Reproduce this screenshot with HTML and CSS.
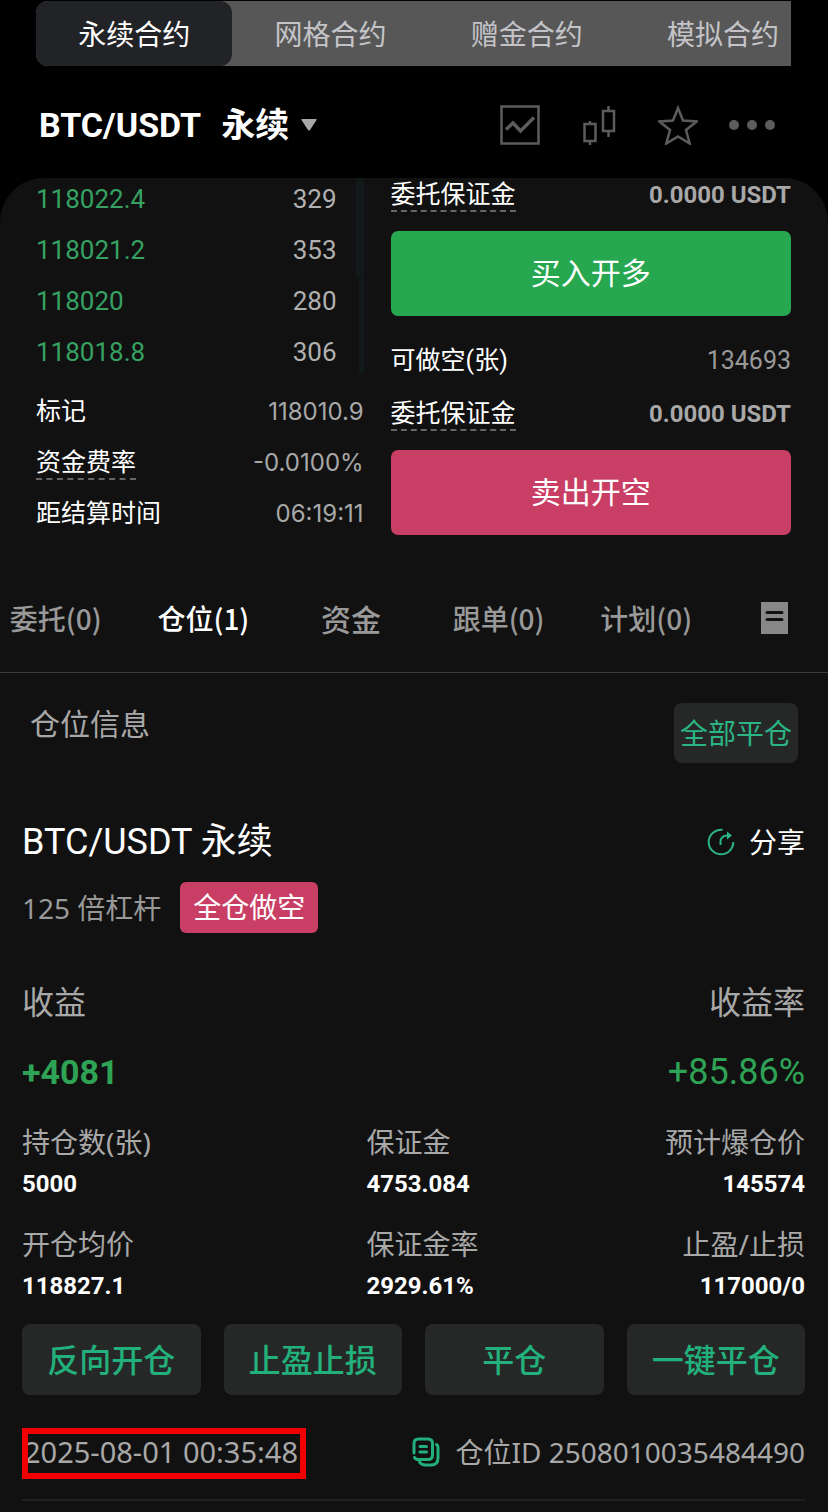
FILE: index.html
```html
<!DOCTYPE html>
<html lang="zh-CN">
<head>
    <meta charset="utf-8">
    <meta name="viewport" content="width=device-width, initial-scale=1">
    <title>BTC/USDT 永续</title>
    <link rel="stylesheet" href="styles.css">
</head>
<body>
    <!-- Contract type -->
    <nav class="contract-tabs">
        <button class="contract-tab active">永续合约</button>
        <button class="contract-tab">网格合约</button>
        <button class="contract-tab">赠金合约</button>
        <button class="contract-tab">模拟合约</button>
    </nav>

    <!-- Pair header -->
    <header class="pair-header">
        <button class="pair-select">
            <span>BTC/USDT</span>
            <span class="pair-type">永续</span>
            <svg class="caret" width="16" height="12" viewBox="0 0 16 12"><path d="M1 0h14q1 0 .5 1L9 11q-1 1-2 0L.5 1Q0 0 1 0z" fill="#a8a8a8"/></svg>
        </button>
        <div class="header-icons">
            <button class="icon-button" aria-label="走势">
                <svg width="40" height="40" viewBox="0 0 40 40" fill="none" stroke="#5c5c5c">
                    <rect x="1.5" y="1.5" width="37" height="37" stroke-width="2.5"/>
                    <path d="M6 24.500l7-6.500 7.500 8L34 12.500" stroke-width="3.500"/>
                </svg>
            </button>
            <button class="icon-button" aria-label="K线">
                <svg width="34" height="40" viewBox="0 0 34 40" fill="none" stroke="#5c5c5c" stroke-width="2.500">
                    <rect x="2.500" y="19" width="11" height="17"/>
                    <path d="M8 16v3M8 36v4M26.500 1v5M26.500 26v6"/>
                    <rect x="21" y="6" width="11" height="20"/>
                </svg>
            </button>
            <button class="icon-button" aria-label="收藏">
                <svg width="40" height="40" viewBox="0 0 40 40" fill="none" stroke="#5c5c5c" stroke-width="2.500">
                    <path d="M20 3l5 12.500 13.500 1-10.500 8.500 3.700 13.500L20 31.500 8.300 38.500 12 25 1.500 16.500l13.500-1z"/>
                </svg>
            </button>
            <button class="icon-button" aria-label="更多">
                <svg width="48" height="12" viewBox="0 0 48 12" fill="#5c5c5c">
                    <circle cx="6" cy="6" r="5"/><circle cx="24" cy="6" r="5"/><circle cx="42" cy="6" r="5"/>
                </svg>
            </button>
        </div>
    </header>

    <main class="panel">
        <div class="trade">
            <!-- Order book and mark price -->
            <div class="market">
                <ul class="order-book">
                    <li><span class="price">118022.4</span><span>329</span></li>
                    <li><span class="price">118021.2</span><span>353</span></li>
                    <li><span class="price">118020</span><span>280</span></li>
                    <li><span class="price">118018.8</span><span>306</span></li>
                </ul>
                <dl class="rates">
                    <div><dt>标记</dt><dd>118010.9</dd></div>
                    <div><dt><span class="hint">资金费率</span></dt><dd>-0.0100%</dd></div>
                    <div><dt>距结算时间</dt><dd>06:19:11</dd></div>
                </dl>
            </div>

            <!-- Order form -->
            <div class="order-form">
                <div class="form-row"><span class="hint">委托保证金</span><span class="margin">0.0000 USDT</span></div>
                <button class="order-button buy">买入开多</button>
                <div class="form-row available"><span>可做空(张)</span><span class="amount">134693</span></div>
                <div class="form-row"><span class="hint">委托保证金</span><span class="margin">0.0000 USDT</span></div>
                <button class="order-button sell">卖出开空</button>
            </div>
        </div>

        <nav class="list-tabs">
            <button class="list-tab">委托(0)</button>
            <button class="list-tab active">仓位(1)</button>
            <button class="list-tab funds">资金</button>
            <button class="list-tab">跟单(0)</button>
            <button class="list-tab">计划(0)</button>
            <button class="list-tab" aria-label="历史">
                <svg width="27" height="32" viewBox="0 0 27 32">
                    <path d="M0 0h27v32H0z" fill="#888"/>
                    <path d="M6 10.500h15M6 17.500h15" stroke="#111" stroke-width="3" stroke-linecap="round"/>
                </svg>
            </button>
        </nav>

        <div class="position-head">
            <h2>仓位信息</h2>
            <button class="close-all">全部平仓</button>
        </div>

        <!-- Position card -->
        <section class="position">
            <div class="position-row">
                <h3>BTC/USDT 永续</h3>
                <button class="share">
                    <svg width="28" height="28" viewBox="0 0 28 28" fill="none" stroke="#2bb585" stroke-width="2">
                        <path d="M15.500 1.800A12.300 12.300 0 1 0 26.300 14"/>
                        <path d="M13.500 17v-3q0-6.500 7-6.500h2"/>
                        <path d="M20 3.500L25 7.500l-5 4z" fill="#2bb585" stroke="none"/>
                    </svg>
                    <span>分享</span>
                </button>
            </div>
            <div class="leverage">
                <span>125 倍杠杆</span>
                <span class="badge">全仓做空</span>
            </div>

            <div class="position-row profit-labels">
                <span>收益</span><span>收益率</span>
            </div>
            <div class="position-row profit-values">
                <strong>+4081</strong><span class="rate">+85.86%</span>
            </div>

            <dl class="stats">
                <div><dt>持仓数(张)</dt><dd>5000</dd></div>
                <div><dt>保证金</dt><dd>4753.084</dd></div>
                <div><dt>预计爆仓价</dt><dd>145574</dd></div>
                <div><dt>开仓均价</dt><dd>118827.1</dd></div>
                <div><dt>保证金率</dt><dd>2929.61%</dd></div>
                <div><dt>止盈/止损</dt><dd>117000/0</dd></div>
            </dl>

            <div class="actions">
                <button>反向开仓</button>
                <button>止盈止损</button>
                <button>平仓</button>
                <button>一键平仓</button>
            </div>

            <div class="position-foot">
                <time class="open-time" datetime="2025-08-01T00:35:48">2025-08-01 00:35:48</time>
                <button class="position-id">
                    <svg width="28" height="30" viewBox="0 0 28 30" fill="none" stroke="#22b07c" stroke-width="3" stroke-linecap="round">
                        <path d="M2 16V6.500Q2 2 6.500 2h9.500q4.500 0 4.500 4.500V18q0 4.500-4.500 4.500H6.500Q3.500 22.500 2.500 20.500"/>
                        <path d="M8 9.500h6.500M8 15h6.500"/>
                        <path d="M24.500 7.500q1.500 1.200 1.500 3V21q0 7-7 7h-6q-3.500 0-5.500-3"/>
                    </svg>
                    <span>仓位ID 2508010035484490</span>
                </button>
            </div>
        </section>
    </main>
</body>
</html>
```

FILE: styles.css
```css
* {
    box-sizing: border-box;
}

body {
    display: flex;
    flex-direction: column;
    min-height: 100vh;
    margin: 0;
    background-color: #000;
    color: #fff;
    font-family: "Noto Sans", "Noto Sans CJK SC", sans-serif;
    font-size: 28px;
    line-height: 42px;
}

button {
    padding: 0;
    border: none;
    background: none;
    color: inherit;
    font: inherit;
    cursor: pointer;
}

h2, h3, ul, dl, dd {
    margin: 0;
    padding: 0;
    font-weight: normal;
}

svg {
    display: block;
    flex: none;
}

/* contract type tabs, the last one runs off the right edge */
.contract-tabs {
    display: flex;
    margin: 1px 37px 0 36px;
    height: 65px;
    overflow: hidden;
    background-color: #575757;
    border-radius: 12px 0 0 12px;
}

.contract-tab {
    flex: 0 0 26%;
    color: #c4c4c8;
}

.contract-tab.active {
    background-color: #222327;
    border-radius: 12px;
    color: #fff;
}

/* pair header */
.pair-header {
    display: flex;
    align-items: center;
    justify-content: space-between;
    height: 112px;
    padding: 5px 52px 0 39px;
}

.pair-select {
    display: flex;
    align-items: center;
    font-family: Roboto, "Noto Sans CJK SC", sans-serif;
    font-size: 34px;
    font-weight: bold;
}

.pair-type {
    margin: 0 12px 0 20px;
}

.header-icons {
    display: flex;
    align-items: center;
}

.icon-button:nth-child(2) {
    margin: 0 42px;
}

.icon-button:nth-child(4) {
    margin-left: 30px;
}

/* main panel */
.panel {
    flex: 1;
    padding-bottom: 10px;
    background-color: #111;
    border-radius: 44px 44px 0 0;
}

.trade {
    display: grid;
    grid-template-columns: 9fr 11fr;
    gap: 27px;
    padding: 0 37px 0 36px;
    font-family: Roboto, "Noto Sans CJK SC", sans-serif;
    font-size: 25px;
}

.order-book {
    display: flex;
    flex-direction: column;
    gap: 9px;
    padding-right: 27px;
    list-style: none;
    font-size: 26px;
    color: #b0b0b0;
    /* depth bars */
    background:
        linear-gradient(#101a1a, #101a1a) right top / 8px 50% no-repeat,
        linear-gradient(#101a1a, #101a1a) right bottom / 5px 50% no-repeat;
}

.order-book li,
.rates div,
.form-row,
.position-row {
    display: flex;
    justify-content: space-between;
}

.price {
    color: #36a162;
}

.rates {
    display: flex;
    flex-direction: column;
    gap: 9px;
    margin-top: 18px;
}

.rates dd {
    font-family: Inter, sans-serif;
    font-size: 24px;
    color: #a8a8a8;
}

.hint {
    display: inline-block;
    height: 34px;
    border-bottom: 2px dashed #666;
    line-height: 34px;
}

.rates .hint {
    height: 38px;
    line-height: 42px;
}

.form-row {
    line-height: 34px;
}

.margin {
    font-size: 24px;
    font-weight: bold;
    color: #a8a8a8;
}

.amount {
    color: #999;
}

.order-button {
    display: block;
    width: 100%;
    height: 85px;
    margin-top: 19px;
    border-radius: 7px;
    font-size: 30px;
}

.buy {
    background-color: #26a750;
}

.sell {
    background-color: #c93e64;
}

.available {
    margin: 28px 0 19px;
}

/* orders / positions tabs */
.list-tabs {
    display: grid;
    grid-template-columns: repeat(5, 1fr) 108px;
    margin: 28px 0 0 -18px;
    border-bottom: 1px solid #3a3a3a;
}

.list-tab {
    display: flex;
    align-items: center;
    justify-content: center;
    height: 109px;
    color: #999;
    font-family: "Noto Sans CJK SC", sans-serif;
    font-size: 28px;
    font-weight: 500;
}

.list-tab.active {
    color: #fff;
}

.list-tab.funds {
    font-size: 30px;
}

.position-head {
    display: flex;
    align-items: flex-start;
    justify-content: space-between;
    padding: 30px 30px 0;
}

.position-head h2 {
    font-size: 30px;
    color: #a8a8a8;
}

.close-all {
    height: 60px;
    padding: 0 6px;
    background-color: #262827;
    border-radius: 8px;
    color: #2bb585;
}

/* position card */
.position {
    margin: 55px 23px 0 22px;
}

.position h3 {
    font-family: Roboto, "Noto Sans CJK SC", sans-serif;
    font-size: 36px;
    line-height: 48px;
}

.share,
.position-id {
    display: flex;
    align-items: center;
    gap: 14px;
}

.leverage {
    display: flex;
    align-items: center;
    gap: 19px;
    margin-top: 16px;
    color: #999;
}

.badge {
    padding: 0 13px;
    background-color: #c93e64;
    border-radius: 6px;
    color: #fff;
    line-height: 51px;
}

.profit-labels {
    margin-top: 49px;
    color: #a8a8a8;
    font-size: 32px;
    line-height: 40px;
}

.profit-values {
    margin-top: 28px;
    color: #2fa355;
    font-family: Roboto, sans-serif;
    font-size: 34px;
    line-height: 44px;
}

.rate {
    font-size: 36px;
}

.stats {
    display: grid;
    grid-template-columns: 44% 1fr auto;
    row-gap: 18px;
    margin-top: 27px;
}

.stats div:nth-child(3n) {
    text-align: right;
}

.stats dt {
    color: #a8a8a8;
}

.stats dd {
    font-family: Roboto, sans-serif;
    font-size: 24px;
    font-weight: bold;
}

.actions {
    display: grid;
    grid-template-columns: repeat(4, 1fr);
    gap: 23px;
    margin-top: 17px;
}

.actions button {
    height: 71px;
    background-color: #262827;
    border-radius: 8px;
    color: #22b07c;
    font-size: 32px;
    font-weight: 500;
}

.position-foot {
    display: flex;
    justify-content: space-between;
    padding: 36px 0 26px;
    border-bottom: 2px solid #202020;
    color: #a8a8a8;
}

.open-time {
    position: relative;
    padding: 0 8px 0 2px;
    font-size: 29px;
}

/* red frame round the open time */
.open-time::after {
    content: "";
    position: absolute;
    inset: -3px 0 -6px;
    border: 6px solid #f00000;
}

.position-id {
    gap: 16px;
}
```
